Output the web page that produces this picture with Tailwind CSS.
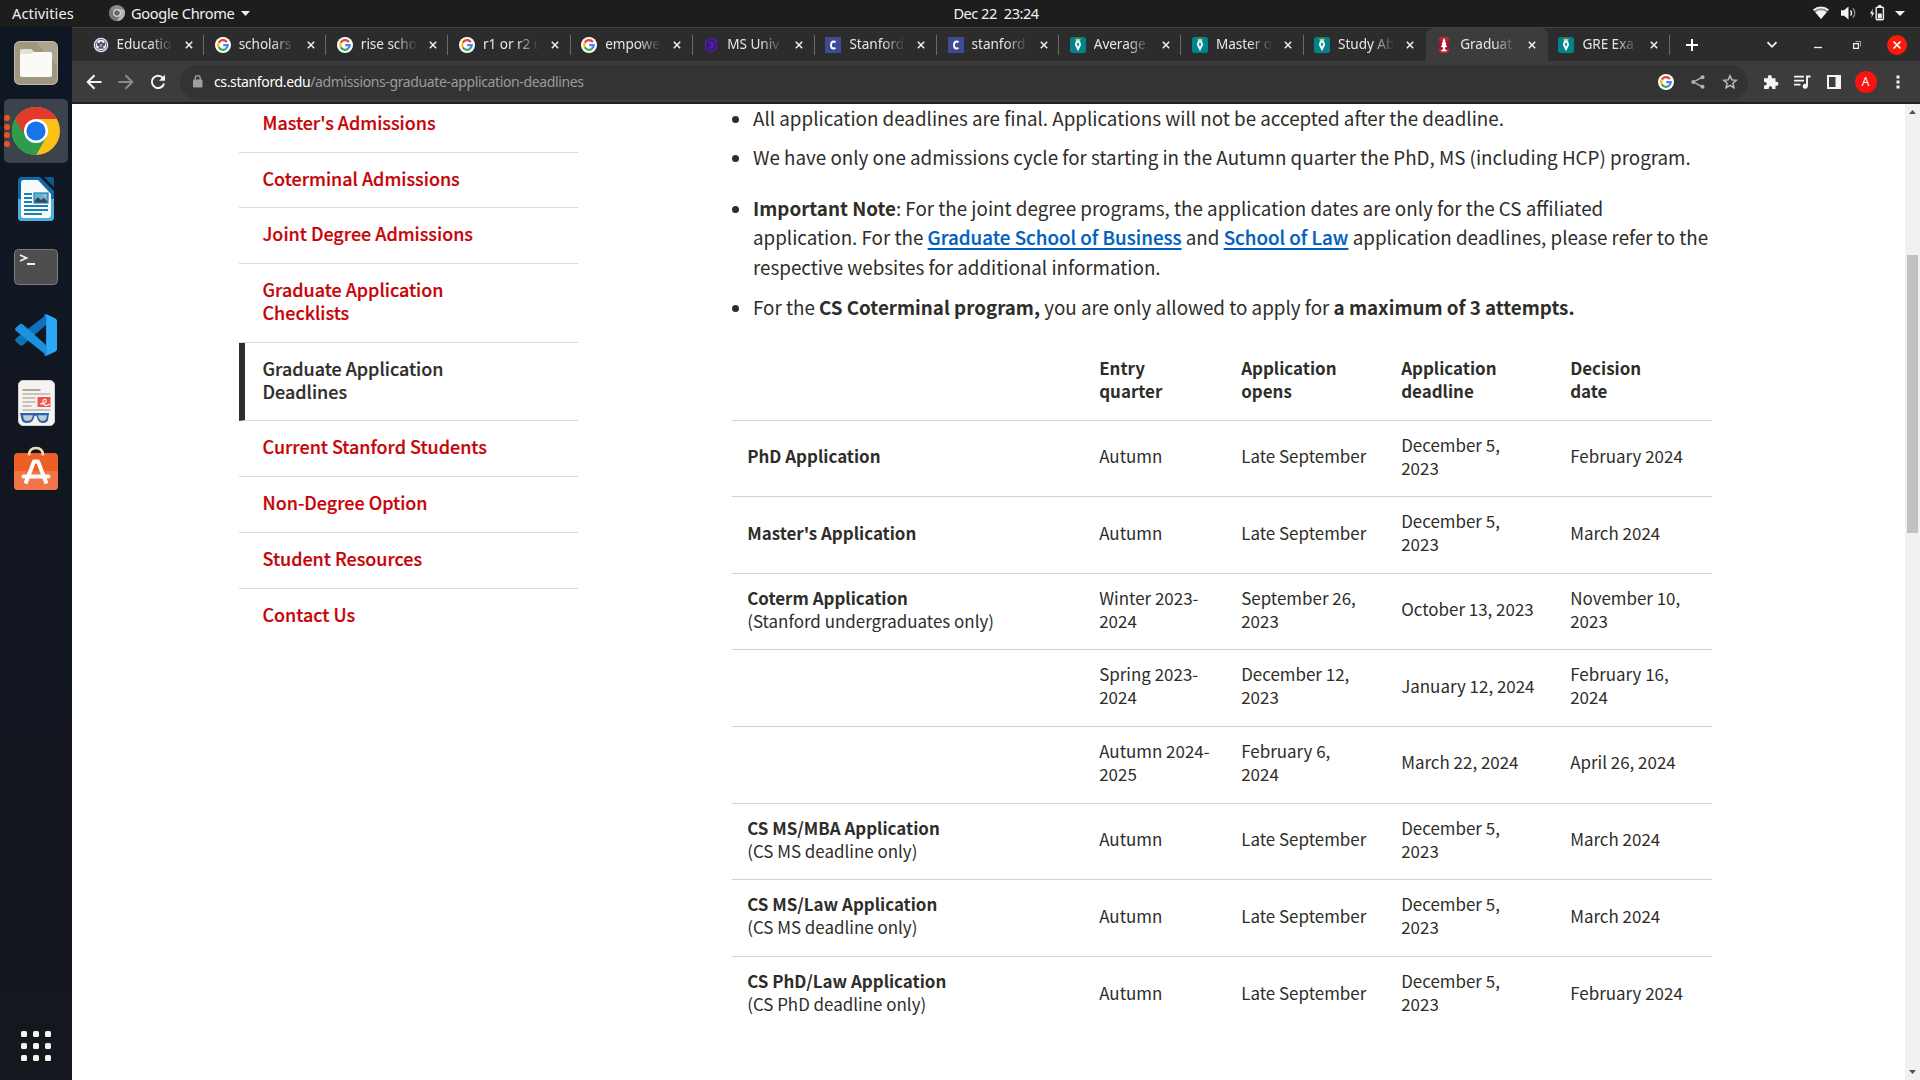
<!DOCTYPE html>
<html lang="en">
<head>
<meta charset="utf-8">
<title>Graduate Application Deadlines</title>
<script src="https://cdn.jsdelivr.net/npm/@tailwindcss/browser@4"></script>
</head>
<body class="w-[1920px] h-[1080px] overflow-hidden flex flex-col bg-[#1d1d1d] font-['Noto_Sans',sans-serif]">

<!-- shared symbols -->
<svg class="hidden">
  <symbol id="google" viewBox="0 0 16 16">
    <circle cx="8" cy="8" r="8" fill="#fff"/>
    <g fill="none" stroke-width="2.2">
      <path d="M11.9 5.2A4.8 4.8 0 0 0 3.8 5.7" stroke="#ea4335"/>
      <path d="M3.8 5.7a4.8 4.8 0 0 0 0 4.6" stroke="#fbbc05"/>
      <path d="M3.8 10.3a4.8 4.8 0 0 0 7.3 1.4" stroke="#34a853"/>
      <path d="M11.1 11.7A4.8 4.8 0 0 0 12.8 8.1H8.2" stroke="#4285f4"/>
    </g>
  </symbol>
  <symbol id="seal" viewBox="0 0 16 16">
    <circle cx="8" cy="8" r="7.6" fill="#f4f2f8" stroke="#3a3560" stroke-width=".9"/>
    <circle cx="8" cy="8" r="5.6" fill="#fdfdff" stroke="#5d5385" stroke-width=".9"/>
    <path d="M3.600 4.700 6 6.200 7.200 4.400h1.600L10 6.200l2.400-1.500-.4 4-2 .9.900 2.200H5.100L6 9.600l-2-.9z" fill="#55506a"/>
    <path d="M7 7h2v2.400l-1 .8-1-.8z" fill="#c49a9a"/>
  </symbol>
  <symbol id="cube" viewBox="0 0 16 16">
    <path d="M8 1.200 13.500 4.400v7.200L8 14.800l-5.500-3.200V4.400z" fill="none" stroke="#5a0fe0" stroke-width="1.400"/>
    <path d="M8 4 11.200 5.800v4.300L8 12 5 10.300V9l3 1V7.500L4.800 5.800z" fill="#5a0fe0"/>
  </symbol>
  <symbol id="cletter" viewBox="0 0 16 16">
    <rect width="16" height="16" fill="#3d4a94"/>
    <path d="M10.600 5.300A3 3 0 0 0 8.600 4.500C6.800 4.500 6 6.200 6 8.200s.8 3.300 2.300 3.300a3 3 0 0 0 2.100-.8" fill="none" stroke="#fff" stroke-width="1.900"/>
  </symbol>
  <symbol id="pen" viewBox="0 0 16 16">
    <rect width="16" height="16" rx="2.500" fill="#008489"/>
    <path d="M5.600 1.800h4.800v1.500H5.600z" fill="#f2c230"/>
    <path d="M6.200 3.300h3.600l1.400 4.500L8 14.200 4.800 7.800z" fill="#e9f7f7"/>
    <path d="M8 5 9.200 7.600 8 9.500 6.800 7.600z" fill="#008489"/>
  </symbol>
  <symbol id="tree" viewBox="0 0 16 16">
    <path d="M5 0h6l2 2v12l-2 2H5l-2-2V2z" fill="#a3102a"/>
    <path d="M5 0h6l2 2v2h-2V2.500H5V4H3V2zM3 12h2v1.500h6V12h2v2l-2 2H5l-2-2z" fill="#c9243c"/>
    <path d="M8 1 9.600 4 9 4.200l1.500 2.600-.8.200 1.400 3-2.200.4v1.600l1.800 1.300v.9H5.300v-.9L7.100 12v-1.600l-2.200-.4 1.400-3-.8-.2L7 4.200 6.400 4z" fill="#fff"/>
  </symbol>
</svg>

<!-- desktop top bar -->
<header class="h-[27px] shrink-0 grid grid-cols-3 items-center text-[#f2f2f2] text-[14.600px] leading-[24px] pb-px">
  <div class="flex items-center pl-3">
    <span class="w-[97px] tracking-[0.100px]">Activities</span>
    <svg class="w-4 h-4" viewBox="0 0 16 16"><circle cx="8" cy="8" r="8" fill="#8b8b8b"/><path d="M8 8 1.200 4A8 8 0 0 0 8 16l3.500-6z" fill="#777"/><path d="M8 4.300h7A8 8 0 0 1 8 16l3.300-6z" fill="#b5b5b5"/><circle cx="8" cy="8" r="3.800" fill="#eee"/><circle cx="8" cy="8" r="2.800" fill="#666"/></svg>
    <span class="ml-1.5 w-[110px] tracking-[-0.330px]">Google Chrome</span>
    <svg class="w-[9px] h-[5px]" viewBox="0 0 9 5"><path d="M0 0h9L4.500 5z" fill="#f2f2f2"/></svg>
  </div>
  <div class="flex justify-center gap-[7px] pl-[72px] tracking-[-0.500px]"><span>Dec 22</span><span>23:24</span></div>
  <div class="flex items-center justify-end pr-[15px]">
    <svg width="16" height="14" viewBox="0 0 16 14"><path d="M0.500 4A11.500 11.500 0 0 1 15.500 4L8 13z" fill="#8d8d8d"/><path d="M.5 4.200A11.300 11.300 0 0 1 15.500 4.200" stroke="#f2f2f2" stroke-width="1.600" fill="none"/><path d="M2.300 6.200a9 9 0 0 1 11.400 0L8 13z" fill="#f2f2f2"/></svg>
    <svg class="ml-3" width="16" height="16" viewBox="0 0 16 16"><path d="M0 5.300h3L7.500 1.500v13L3 10.700H0z" fill="#f2f2f2"/><path d="M9.500 5.500a3.500 3.500 0 0 1 0 5" stroke="#f2f2f2" stroke-width="1.400" fill="none"/><path d="M11.800 3.300a6.500 6.500 0 0 1 0 9.400" stroke="#8d8d8d" stroke-width="1.300" fill="none"/></svg>
    <svg class="ml-3" width="16" height="16" viewBox="0 0 16 16"><path d="M4 3.500 1 8.800h2L2.300 13 5.200 7.600H3.300z" fill="#f2f2f2"/><rect x="7.200" y="2.200" width="7.200" height="12.600" rx="1" fill="none" stroke="#f2f2f2" stroke-width="1.400"/><path d="M9.300 0h3v2h-3zM8.800 8.500h4v5h-4z" fill="#f2f2f2"/></svg>
    <svg class="ml-[10px]" width="10" height="5" viewBox="0 0 10 5"><path d="M0 0h10L5 5z" fill="#f2f2f2"/></svg>
  </div>
</header>

<div class="flex flex-1 min-h-0">
  <!-- dock -->
  <aside class="w-[72px] shrink-0 flex flex-col items-center bg-linear-to-b from-[#0f1724] via-[#121621] to-[#15171e] pt-2">
    <div class="h-[68px] flex items-center"><svg width="44" height="44" viewBox="0 0 44 44" class="mb-3"><rect x=".5" y=".5" width="43" height="43" rx="5" fill="#a0977f" stroke="#c2bba7"/><path d="M22 1h17q4 0 4 4v20z" fill="#ada58f"/><path d="M6 10q0-2 2-2h9l4 3.500h4V20H6z" fill="#e3dfd2"/><path d="M6 15q0-2 2-2h9l2.500-2H36q2 0 2 2v21q0 2-2 2H8q-2 0-2-2z" fill="#fbfaf8"/></svg></div>
    <div class="relative w-16 h-16 -mt-1 rounded-[5px] bg-[#3d434d] flex items-center justify-center">
      <div class="absolute left-0 top-4 flex flex-col gap-[2.700px]"><i class="w-1.5 h-1.5 rounded-full bg-[#e95420]"></i><i class="w-1.5 h-1.5 rounded-full bg-[#e95420]"></i><i class="w-1.5 h-1.5 rounded-full bg-[#e95420]"></i><i class="w-1.5 h-1.5 rounded-full bg-[#e95420]"></i></div>
      <svg width="48" height="48" viewBox="0 0 48 48"><circle cx="24" cy="24" r="24" fill="#fbc116"/><path d="M24 24 3.200 12A24 24 0 0 0 24 48l10.400-18z" fill="#2d9d4c"/><path d="M24 24H3.200V12A24 24 0 0 1 44.800 12H24z" fill="#e23b2e"/><path d="M3.200 12 13.600 30 24 12z" fill="#e23b2e"/><path d="M3.200 12A24 24 0 0 0 24 48l10.400-18L24 34a11 11 0 0 1-10.400-4z" fill="#2d9d4c"/><circle cx="24" cy="24" r="12" fill="#fff"/><circle cx="24" cy="24" r="9.600" fill="#1a73e8"/></svg>
    </div>
    <div class="h-[72px] w-full flex items-center justify-center"><svg width="36" height="44" viewBox="0 0 36 44"><path d="M4 0h18l14 14v26q0 4-4 4H4q-4 0-4-4V4q0-4 4-4z" fill="#0c6aa6"/><path d="M0 22h36v18q0 4-4 4H4q-4 0-4-4z" fill="#4db0dd"/><path d="M5.500 3H20l13 14v20.500q0 3.500-3.500 3.500h-24Q3 41 3 37.500V6q0-3 2.500-3z" fill="#f8f9fa"/><path d="M26 0h8q2 0 2 2v8z" fill="#0c5c92"/><path d="M6 17h8M6 21h8M6 25h8M6 29h24M6 33h24M6 37h18" stroke="#1a80b8" stroke-width="2"/><rect x="16" y="16" width="14" height="10" fill="#5fb6dc"/><path d="M17 26v-3l3-3 3 3 3-2 4 4v1z" fill="#444"/><circle cx="26.500" cy="18.500" r="1.300" fill="#f2b84b"/><rect x="16" y="16" width="14" height="10" fill="none" stroke="#1a80b8" stroke-width="1.200"/></svg></div>
    <div class="h-16 w-full flex items-center justify-center"><svg width="44" height="36" viewBox="0 0 44 36"><rect x=".5" y=".5" width="43" height="35" rx="4" fill="#4e4e4e" stroke="#7c7c7c"/><path d="M6 6l6.500 3L6 12M13 15h8" stroke="#f2f2f2" stroke-width="1.800" fill="none"/></svg></div>
    <div class="h-[72px] w-full flex items-center justify-center"><svg width="42" height="42" viewBox="0 0 42 42"><path d="M31 1v10L8 31q-2 1.500-3.500 0l-4-3.700q-1-1.500.5-3z" fill="#0f72b8"/><path d="M31 41V31L8 10.500q-2-1.500-3.500 0l-4 3.500q-1 1.500.5 3z" fill="#1c92dc"/><path d="M31 0l9.500 4.500Q42 5.500 42 7v28q0 1.500-1.500 2.500L31 42q1 0 1-2V2q0-2-1-2z" fill="#2aa8f5"/><path d="M31 0q1 0 1 2v38q0 2-1 2-1 0-2-1l2-3V4l-2-3z" fill="#1f97e6"/></svg></div>
    <div class="h-16 w-full flex items-center justify-center"><svg width="37" height="46" viewBox="0 0 37 46"><rect x=".5" y=".5" width="36" height="45" rx="4.500" fill="#f4f3f1" stroke="#cfcfcf"/><path d="M4.500 10h18" stroke="#b0a896" stroke-width="2"/><path d="M4.500 14h28M4.500 18h13M4.500 22h13M4.500 26h9M4.500 30h28" stroke="#c9c4b8" stroke-width="1.800"/><rect x="19.500" y="17" width="13" height="10" fill="#f0524f"/><path d="M22 24c4 0 7-2 6-4s-4 0-3 3 4 3 7 1" stroke="#fff" stroke-width="1.100" fill="none"/><path d="M2 33h29l-1 7q-1 3-5 3t-5.500-4l-1-3q-1-1-2 0l-1 3Q14 43 9 43t-5.500-4z" fill="#2763ae"/><path d="M5 35.200h10l-1.500 4Q12 41 9 41t-3.500-3zM19.500 35.200H29l-.8 4Q27 41 24.500 41T21 38.500z" fill="#c6ccd4"/></svg></div>
    <div class="h-[66px] w-full flex items-center justify-center"><svg width="44" height="44" viewBox="0 0 44 44"><rect y="7" width="44" height="37" rx="4" fill="#ee5f26"/><path d="M0 25h44v15q0 4-4 4H4q-4 0-4-4z" fill="#f0764a"/><path d="M15 9.500Q15 2 22 2t7 7.500" stroke="#f3dcae" stroke-width="2.600" fill="none"/><path d="M11.500 37.500 20 15.500h4l8.500 22" stroke="#fff" stroke-width="4" fill="none" stroke-linejoin="round"/><path d="M9.500 30.500h25" stroke="#fff" stroke-width="4" stroke-linecap="round"/></svg></div>
    <svg class="mt-auto mb-[18px]" width="32" height="32" viewBox="0 0 32 32" fill="#f4f4ee"><rect x="1" y="1" width="6" height="6" rx="1.500"/><rect x="13" y="1" width="6" height="6" rx="1.500"/><rect x="25" y="1" width="6" height="6" rx="1.500"/><rect x="1" y="13" width="6" height="6" rx="1.500"/><rect x="13" y="13" width="6" height="6" rx="1.500"/><rect x="25" y="13" width="6" height="6" rx="1.500"/><rect x="1" y="25" width="6" height="6" rx="1.500"/><rect x="13" y="25" width="6" height="6" rx="1.500"/><rect x="25" y="25" width="6" height="6" rx="1.500"/></svg>
  </aside>

  <!-- browser window -->
  <div class="flex-1 min-w-0 flex flex-col">
    <div class="h-[34px] shrink-0 flex items-stretch bg-[#2c2c2c] border-t border-[#404040] pl-[10px] text-[#e6e6e6]">
      <div id="tabs" class="flex"></div>
      <div class="flex-1 flex items-center">
        <svg class="ml-[14.500px]" width="14" height="14" viewBox="0 0 14 14"><path d="M7 1v12M1 7h12" stroke="#fff" stroke-width="2"/></svg>
        <div class="ml-auto pr-[13px] flex items-center">
          <svg class="mr-[36px]" width="12" height="8" viewBox="0 0 12 8"><path d="M1.500 1.200 6 5.800l4.500-4.600" stroke="#f2f2f2" stroke-width="1.800" fill="none"/></svg>
          <svg class="mr-[31px]" width="8" height="8" viewBox="0 0 8 8"><path d="M0 6.500h8" stroke="#f2f2f2" stroke-width="1.300"/></svg>
          <svg class="mr-[26px]" width="8" height="8" viewBox="0 0 8 8"><path d="M.6 2.600h4.800v4.800H.6z" stroke="#f2f2f2" stroke-width="1.200" fill="none"/><path d="M2.500.5h5v5" stroke="#a8a8a8" fill="none"/></svg>
          <svg width="20" height="20" viewBox="0 0 20 20"><circle cx="10" cy="10" r="10" fill="#fa1b08"/><path d="M6.500 6.500l7 7M13.500 6.500l-7 7" stroke="#fff" stroke-width="1.700"/></svg>
        </div>
      </div>
    </div>

    <div class="h-[43px] shrink-0 flex items-center bg-[#3c3c3c] border-b-2 border-[#202020] pl-[14px] pr-[17px]">
      <svg width="16" height="16" viewBox="0 0 16 16"><path d="M15.500 8H2M8.500 1.200 1.700 8l6.800 6.800" stroke="#f5f5f5" stroke-width="2" fill="none"/></svg>
      <svg class="ml-4" width="16" height="16" viewBox="0 0 16 16"><path d="M.5 8H14M7.500 1.200 14.300 8l-6.800 6.800" stroke="#8a8a8a" stroke-width="2" fill="none"/></svg>
      <svg class="ml-4" width="16" height="16" viewBox="0 0 16 16"><path d="M13 4A6.200 6.200 0 1 0 14.100 9.500" stroke="#f5f5f5" stroke-width="2" fill="none"/><path d="M15 .8v6H9z" fill="#f5f5f5"/></svg>
      <div class="ml-[14px] h-[34px] w-[1568px] rounded-full bg-[#333] flex items-center pl-[13px] pr-[10px]">
        <svg width="10" height="13" viewBox="0 0 10 13"><rect y="4.500" width="9.500" height="8" rx="1" fill="#9aa0a6"/><path d="M2.200 5V3.200a2.500 2.500 0 0 1 5 0V5" stroke="#9aa0a6" stroke-width="1.300" fill="none"/></svg>
        <span class="ml-[11px] text-[14px] tracking-[-0.370px] text-[#9b9b9b] whitespace-nowrap"><span class="text-white">cs.stanford.edu</span>/admissions-graduate-application-deadlines</span>
        <svg class="ml-auto" width="16" height="16"><use href="#google"/></svg>
        <svg class="ml-[17px]" width="14" height="14" viewBox="0 0 14 14"><path d="M11.500 2.200 2.500 7l9 4.800" stroke="#b4b4b4" stroke-width="1.400" fill="none"/><g fill="#b4b4b4"><circle cx="11.500" cy="2.300" r="2"/><circle cx="2.300" cy="7" r="2"/><circle cx="11.500" cy="11.700" r="2"/></g></svg>
        <svg class="ml-[17px]" width="16" height="16" viewBox="0 0 16 16"><path d="M8 1.800l1.800 4.100 4.400.4-3.300 3 1 4.400L8 11.400l-3.900 2.300 1-4.400-3.300-3 4.400-.4z" stroke="#bdbdbd" stroke-width="1.500" fill="none"/></svg>
      </div>
      <svg class="ml-[14.500px]" width="16" height="16" viewBox="0 0 16 16"><path d="M1 4.200h3.800V3a2 2 0 0 1 4 0v1.200h3.700v3.600h1a2 2 0 0 1 0 4h-1V15H9.200v-1a1.700 1.700 0 0 0-3.400 0v1H1v-3.600h1a1.700 1.700 0 0 0 0-3.400H1z" fill="#f5f5f5"/></svg>
      <svg class="ml-[15px]" width="17" height="14" viewBox="0 0 17 14"><path d="M0 1.700h10M0 5.700h10M0 9.700h6.500" stroke="#f5f5f5" stroke-width="1.700"/><path d="M13 11V1.500h3.500" stroke="#f5f5f5" stroke-width="1.900" fill="none"/><circle cx="11.200" cy="11.200" r="2.500" fill="#f5f5f5"/></svg>
      <svg class="ml-[16px]" width="14" height="14" viewBox="0 0 14 14"><path d="M0 0h14v14H0zM2 2v10h6.500V2z" fill="#f5f5f5" fill-rule="evenodd"/></svg>
      <div class="ml-[14px] w-[22px] h-[22px] rounded-full bg-[#fc1212] text-white text-[12px] leading-[22px] text-center">A</div>
      <svg class="ml-[19px]" width="4" height="14" viewBox="0 0 4 14" fill="#f5f5f5"><rect x=".5" y=".5" width="3" height="3"/><rect x=".5" y="5.500" width="3" height="3"/><rect x=".5" y="10.500" width="3" height="3"/></svg>
    </div>

    <!-- page -->
    <div class="flex-1 min-h-0 flex bg-white text-[#2e2d29] font-['Noto_Sans_CJK_SC',sans-serif]">
      <nav class="ml-[167px] w-[339px] h-full text-[17.950px] leading-[23px] font-medium text-[#c60407] [-webkit-text-stroke:0.200px] divide-y divide-[#d9d9d9] -mt-[7.500px]">
        <a class="block h-14 pt-[14px] pl-[23.500px]">Master's Admissions</a>
        <a class="block h-[55.500px] pt-[14px] pl-[23.500px]">Coterminal Admissions</a>
        <a class="block h-[56px] pt-[14px] pl-[23.500px]">Joint Degree Admissions</a>
        <a class="block h-[78.500px] pt-[14px] pl-[23.500px]">Graduate Application<br>Checklists</a>
        <a class="block h-[78.500px] pt-[14px] pl-[17.500px] border-l-6 border-l-[#2e2d29] text-[#2e2d29]">Graduate Application<br>Deadlines</a>
        <a class="block h-14 pt-[14px] pl-[23.500px]">Current Stanford Students</a>
        <a class="block h-14 pt-[14px] pl-[23.500px]">Non-Degree Option</a>
        <a class="block h-14 pt-[14px] pl-[23.500px]">Student Resources</a>
        <a class="block h-14 pt-[14px] pl-[23.500px]">Contact Us</a>
      </nav>

      <main class="ml-[154px] w-[980px] -mt-px">
        <ul class="pl-[21px] w-[985px] text-[18.790px] leading-[29.400px] list-none whitespace-nowrap">
          <li class="relative h-[29px]"><i class="absolute -left-[21px] top-[13px] w-[7px] h-[7px] rounded-full bg-[#2e2d29]"></i>All application deadlines are final. Applications will not be accepted after the deadline.</li>
          <li class="relative mt-[10px]"><i class="absolute -left-[21px] top-[13px] w-[7px] h-[7px] rounded-full bg-[#2e2d29]"></i>We have only one admissions cycle for starting in the Autumn quarter the PhD, MS (including HCP) program.</li>
          <li class="relative mt-[21.500px]"><i class="absolute -left-[21px] top-[13px] w-[7px] h-[7px] rounded-full bg-[#2e2d29]"></i><b class="font-bold">Important Note</b>: For the joint degree programs, the application dates are only for the CS affiliated<br>application. For the <a class="font-medium text-[#0060c0] underline decoration-2 underline-offset-3 [-webkit-text-stroke:0.200px]">Graduate School of Business</a> and <a class="font-medium text-[#0060c0] underline decoration-2 underline-offset-3 [-webkit-text-stroke:0.200px]">School of Law</a> application deadlines, please refer to the<br>respective websites for additional information.</li>
          <li class="relative mt-[11px]"><i class="absolute -left-[21px] top-[13px] w-[7px] h-[7px] rounded-full bg-[#2e2d29]"></i>For the <b class="font-bold">CS Coterminal program,</b> you are only allowed to apply for <b class="font-bold">a maximum of 3 attempts.</b></li>
        </ul>
        <div id="table" class="mt-[22.700px] text-[16.960px] leading-[23px]"></div>
      </main>

      <!-- scrollbar -->
      <div class="ml-auto w-[15px] bg-[#f1f1f1] flex flex-col items-center pt-[6px] pb-[6px]">
        <svg width="7" height="4" viewBox="0 0 7 4"><path d="M0 4h7L3.500 0z" fill="#505050"/></svg>
        <div class="mt-[141px] w-[11px] h-[278px] bg-[#c1c1c1]"></div>
        <svg class="mt-auto" width="7" height="4" viewBox="0 0 7 4"><path d="M0 0h7L3.500 4z" fill="#505050"/></svg>
      </div>
    </div>
  </div>
</div>

<script>
const tabs = [
  ['seal', 'Educatio'], ['google', 'scholars'], ['google', 'rise scho'], ['google', 'r1 or r2 u'],
  ['google', 'empowe'], ['cube', 'MS Univ'], ['cletter', 'Stanford'], ['cletter', 'stanford'],
  ['pen', 'Average'], ['pen', 'Master o'], ['pen', 'Study Ab'], ['tree', 'Graduat'], ['pen', 'GRE Exa']
];
const active = 11;
document.getElementById('tabs').innerHTML = tabs.map(([icon, title], i) => `
  <div class="w-[122.170px] flex items-center pl-[10.500px] ${i === active ? 'bg-[#3c3c3c] rounded-t-lg' : ''}">
    <svg class="shrink-0" width="16" height="16"><use href="#${icon}"/></svg>
    <span class="ml-[8px] w-[56px] overflow-hidden whitespace-nowrap text-[13.600px] tracking-[-0.050px] mask-r-from-60% mask-r-to-100%">${title}</span>
    <svg class="ml-[12px] shrink-0" width="8" height="8" viewBox="0 0 8 8"><path d="M.8.8l6.400 6.400M7.200.8.8 7.200" stroke="#f2f2f2" stroke-width="1.500"/></svg>
    <i class="ml-auto w-px h-5 ${i === active || i === active - 1 ? '' : 'bg-[#6a6a6a]'}"></i>
  </div>`).join('');

const rows = [
  ['', '<b>Entry<br>quarter</b>', '<b>Application<br>opens</b>', '<b>Application<br>deadline</b>', '<b>Decision<br>date</b>'],
  ['<b>PhD Application</b>', 'Autumn', 'Late September', 'December 5,<br>2023', 'February 2024'],
  ["<b>Master's Application</b>", 'Autumn', 'Late September', 'December 5,<br>2023', 'March 2024'],
  ['<b>Coterm Application</b><br>(Stanford undergraduates only)', 'Winter 2023-<br>2024', 'September 26,<br>2023', 'October 13, 2023', 'November 10,<br>2023'],
  ['', 'Spring 2023-<br>2024', 'December 12,<br>2023', 'January 12, 2024', 'February 16,<br>2024'],
  ['', 'Autumn 2024-<br>2025', 'February 6,<br>2024', 'March 22, 2024', 'April 26, 2024'],
  ['<b>CS MS/MBA Application</b><br>(CS MS deadline only)', 'Autumn', 'Late September', 'December 5,<br>2023', 'March 2024'],
  ['<b>CS MS/Law Application</b><br>(CS MS deadline only)', 'Autumn', 'Late September', 'December 5,<br>2023', 'March 2024'],
  ['<b>CS PhD/Law Application</b><br>(CS PhD deadline only)', 'Autumn', 'Late September', 'December 5,<br>2023', 'February 2024']
];
document.getElementById('table').innerHTML = rows.map((cells, i) => `
  <div class="grid grid-cols-[352px_142px_160px_169px_157px] items-center h-[76.560px] pb-[5.500px] whitespace-nowrap ${i < rows.length - 1 ? 'border-b border-[#d0d0d0]' : ''}">
    ${cells.map(c => `<div class="pl-[15.200px]">${c}</div>`).join('')}
  </div>`).join('');
</script>
</body>
</html>
